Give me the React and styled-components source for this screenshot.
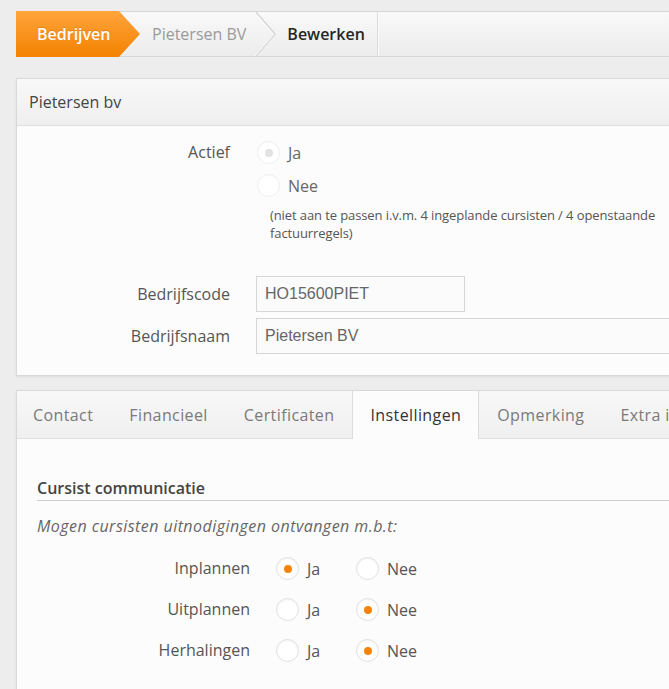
import React from "react";
import styled, { createGlobalStyle } from "styled-components";

const Global = createGlobalStyle`
  html, body { margin: 0; padding: 0; overflow: hidden; }
  body {
    background: #ededed;
    font-family: "Open Sans", "Noto Sans", sans-serif;
    color: #555;
  }
  * { box-sizing: border-box; }
`;

const Page = styled.div`
  width: 1000px;
  padding: 11px 0 40px 16px;
  display: flex;
  flex-direction: column;
`;

const Crumbs = styled.nav`
  display: flex;
  align-items: stretch;
  height: 46px;
  background: linear-gradient(#f9f9f9, #ececec);
  border-top: 1px solid #d6d6d6;
  border-bottom: 1px solid #d6d6d6;
  margin-bottom: 21px;
`;

const CrumbHome = styled.a`
  display: flex;
  align-items: center;
  width: 124px;
  margin: -1px 0;
  padding-left: 21px;
  font-size: 16px;
  font-weight: 600;
  color: #fff;
  text-shadow: 0 -1px 0 rgba(190, 90, 0, 0.35);
  background: linear-gradient(#ffa43c, #f38200);
  clip-path: polygon(0 0, calc(100% - 21px) 0, 100% 50%, calc(100% - 21px) 100%, 0 100%);
`;

const Crumb = styled.span`
  display: flex;
  align-items: center;
  padding: ${(p) => (p.$last ? "0 12px 0 0" : "0 9px 0 12px")};
  font-size: 16px;
  font-weight: ${(p) => (p.$current ? 600 : 400)};
  color: ${(p) => (p.$current ? "#262626" : "#9a9a9a")};
  border-right: ${(p) => (p.$last ? "1px solid #dcdcdc" : "none")};
  box-shadow: ${(p) => (p.$last ? "1px 0 0 #fafafa" : "none")};
`;

const Chevron = styled.svg`
  display: block;
  flex: none;
  margin-right: 10px;
`;

const Panel = styled.section`
  background: #fcfcfc;
  border: 1px solid #d9d9d9;
  box-shadow: 0 1px 2px rgba(0, 0, 0, 0.08);
  margin-bottom: ${(p) => p.$mb || 0}px;
`;

const PanelHead = styled.header`
  height: 47px;
  display: flex;
  align-items: center;
  padding-left: 12px;
  font-size: 16px;
  color: #444;
  background: linear-gradient(#f8f8f8, #efefef);
  border-bottom: 1px solid #dedede;
`;

const PanelBody = styled.div`
  padding: ${(p) => p.$pad};
`;

const FormRow = styled.div`
  display: grid;
  grid-template-columns: 225px 1fr;
  column-gap: 14px;
  align-items: ${(p) => (p.$center ? "center" : "start")};
  margin-top: ${(p) => p.$mt || 0}px;
`;

const Label = styled.div`
  text-align: right;
  padding-right: 12px;
  font-size: 16px;
  line-height: 23px;
  color: #555;
`;

const Stack = styled.div`
  display: flex;
  flex-direction: column;
  gap: 10px;
`;

const Inline = styled.div`
  display: flex;
  align-items: center;
`;

const Option = styled.label`
  display: flex;
  align-items: center;
  gap: 8px;
  height: 23px;
  width: ${(p) => (p.$w ? p.$w + "px" : "auto")};
  font-size: 16px;
  line-height: 23px;
  color: ${(p) => (p.$disabled ? "#666" : "#555")};
  padding-left: ${(p) => p.$pl || 0}px;
`;

const OptionText = styled.span`
  position: relative;
  top: 1px;
`;

const Circle = styled.span`
  position: relative;
  flex: none;
  width: 23px;
  height: 23px;
  border-radius: 50%;
  background: #fff;
  border: 1px solid ${(p) => (p.$disabled ? "#eeeeee" : "#e0e0e0")};
  box-shadow: inset 0 1px 2px rgba(0, 0, 0, ${(p) => (p.$disabled ? 0.02 : 0.05)});
  &::after {
    content: "";
    display: ${(p) => (p.$checked ? "block" : "none")};
    position: absolute;
    left: 50%;
    top: 50%;
    width: 8px;
    height: 8px;
    margin: -4px 0 0 -4px;
    border-radius: 50%;
    background: ${(p) => (p.$disabled ? "#e2e2e2" : "#f7830a")};
  }
`;

const Note = styled.p`
  margin: 9px 0 0 14px;
  font-size: 13px;
  letter-spacing: -0.1px;
  line-height: 18px;
  color: #555;
  max-width: 392px;
`;

const Input = styled.input`
  height: 36px;
  width: ${(p) => (p.$w ? p.$w + "px" : "100%")};
  border: 1px solid #d6d6d6;
  background: #fbfbfb;
  padding: 0 8px;
  font-family: "Liberation Sans", Arial, sans-serif;
  font-size: 16px;
  color: #666;
  outline: none;
`;

const TabBar = styled.div`
  display: flex;
  height: 48px;
  background: linear-gradient(#f8f8f8, #efefef);
  border-bottom: 1px solid #dedede;
`;

const Tab = styled.div`
  display: flex;
  align-items: center;
  padding: 0 17px;
  margin-bottom: -1px;
  font-size: 16px;
  letter-spacing: 0.4px;
  white-space: nowrap;
  color: ${(p) => (p.$active ? "#333" : "#7a7a7a")};
  background: ${(p) => (p.$active ? "#fcfcfc" : "transparent")};
  border-left: 1px solid ${(p) => (p.$active ? "#dcdcdc" : "transparent")};
  border-right: 1px solid ${(p) => (p.$active ? "#dcdcdc" : "transparent")};
  margin-left: ${(p) => (p.$first ? -2 : 0)}px;
`;

const SectionTitle = styled.h3`
  margin: 0;
  padding-bottom: 1px;
  font-size: 16px;
  font-weight: 600;
  line-height: 22px;
  color: #444;
  border-bottom: 1px solid #cfcfcf;
`;

const Intro = styled.p`
  margin: 14px 0 20px;
  font-size: 16px;
  font-style: italic;
  letter-spacing: 0.45px;
  line-height: 22px;
  color: #666;
`;

const ChoiceRows = styled.div`
  display: flex;
  flex-direction: column;
  gap: 18px;
`;

function Radio({ checked, disabled, children, w, pl }) {
  return (
    <Option $w={w} $pl={pl} $disabled={disabled}>
      <Circle $checked={checked} $disabled={disabled} />
      <OptionText>{children}</OptionText>
    </Option>
  );
}

const prefs = [
  { label: "Inplannen", ja: true },
  { label: "Uitplannen", ja: false },
  { label: "Herhalingen", ja: false },
];

export default function App() {
  return (
    <>
      <Global />
      <Page>
        <Crumbs>
          <CrumbHome>Bedrijven</CrumbHome>
          <Crumb>Pietersen BV</Crumb>
          <Chevron width="22" height="44" viewBox="0 0 22 44">
            <path d="M1 0 L20 22 L1 44" fill="none" stroke="#d2d2d2" strokeWidth="1.2" />
            <path d="M0 1 L18.5 22.5 L0 44" fill="none" stroke="#ffffff" strokeWidth="1" opacity="0.8" />
          </Chevron>
          <Crumb $current $last>Bewerken</Crumb>
        </Crumbs>

        <Panel $mb={14}>
          <PanelHead>Pietersen bv</PanelHead>
          <PanelBody $pad="15px 0 21px">
            <FormRow>
              <Label>Actief</Label>
              <div>
                <Stack>
                  <Radio checked disabled pl={1}>Ja</Radio>
                  <Radio disabled pl={1}>Nee</Radio>
                </Stack>
                <Note>
                  (niet aan te passen i.v.m. 4 ingeplande cursisten / 4 openstaande factuurregels)
                </Note>
              </div>
            </FormRow>
            <FormRow $center $mt={34}>
              <Label>Bedrijfscode</Label>
              <Input $w={209} defaultValue="HO15600PIET" />
            </FormRow>
            <FormRow $center $mt={6}>
              <Label>Bedrijfsnaam</Label>
              <Input defaultValue="Pietersen BV" />
            </FormRow>
          </PanelBody>
        </Panel>

        <Panel>
          <TabBar>
            <Tab $first>Contact</Tab>
            <Tab>Financieel</Tab>
            <Tab>Certificaten</Tab>
            <Tab $active>Instellingen</Tab>
            <Tab>Opmerking</Tab>
            <Tab>Extra informatie</Tab>
          </TabBar>
          <PanelBody $pad="38px 20px 60px">
            <SectionTitle>Cursist communicatie</SectionTitle>
            <Intro>Mogen cursisten uitnodigingen ontvangen m.b.t:</Intro>
            <ChoiceRows>
              {prefs.map((r) => (
                <FormRow key={r.label} $center>
                  <Label>{r.label}</Label>
                  <Inline>
                    <Radio checked={r.ja} w={80}>Ja</Radio>
                    <Radio checked={!r.ja}>Nee</Radio>
                  </Inline>
                </FormRow>
              ))}
            </ChoiceRows>
          </PanelBody>
        </Panel>
      </Page>
    </>
  );
}
